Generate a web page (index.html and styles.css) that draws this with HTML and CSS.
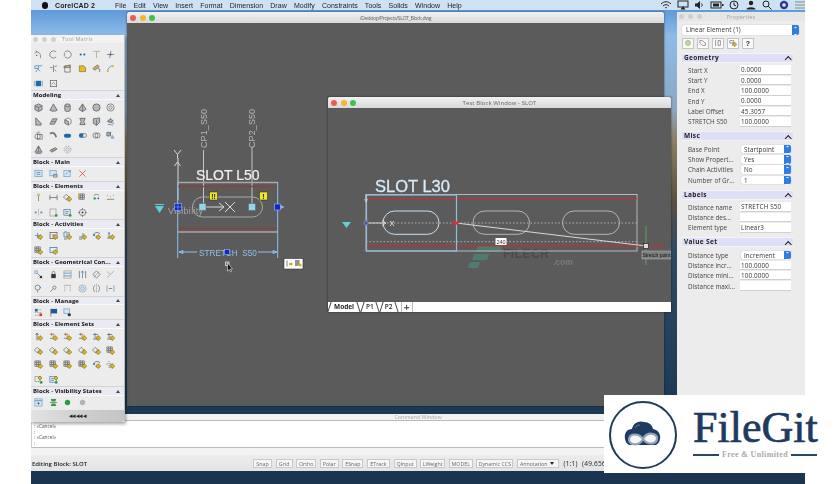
FILE: index.html
```html
<!DOCTYPE html>
<html lang="en">
<head>
<meta charset="utf-8">
<title>CorelCAD - SLOT_Block</title>
<link rel="stylesheet" href="styles.css">
</head>
<body>
<svg class="defs" aria-hidden="true">
  <symbol id="ya" viewBox="0 0 10 10"><path class="y" d="M4.5 5.5h2.3V4l3 2.8-3 2.8V8H4.5z"/></symbol>
  <symbol id="gd" viewBox="0 0 10 10"><circle class="fg" cx="8" cy="8.3" r="1.5"/></symbol>
  <symbol id="win" viewBox="0 0 10 10"><rect class="b" x="1" y="1.5" width="7" height="6.5"/><path class="g" d="M2.500 4h4M2.500 6h3"/></symbol>
  <symbol id="ps" viewBox="0 0 10 10"><path class="g" d="M1 7h5M1 2.500h5"/><path class="r" d="M3 1v3"/><rect class="fg2" x="4" y="3.500" width="2" height="2"/></symbol>
  <symbol id="dg" viewBox="0 0 10 10"><path class="g" d="M3.500 1.500L7 4.500 3.500 7.500.5 4.500z"/></symbol>
  <symbol id="gm" viewBox="0 0 10 10"><path class="g" d="M1 1h6v6H1zM3 1v6M5 1v6M1 3h6M1 5h6"/></symbol>
  <symbol id="box" viewBox="0 0 10 10"><path class="s" d="M5 1l4 2v4.500l-4 2-4-2V3z"/><path class="g" d="M1 3l4 2 4-2M5 5v4"/></symbol>
  <symbol id="cone" viewBox="0 0 10 10"><path class="s" d="M5 1l4 7c-2 1.500-6 1.500-8 0z"/></symbol>
  <symbol id="cyl" viewBox="0 0 10 10"><path class="s" d="M2 2.500c0-2 6-2 6 0v5.500c0 2-6 2-6 0z"/><path class="g" d="M2 3c1 1.500 5 1.500 6 0"/></symbol>
  <symbol id="pyr" viewBox="0 0 10 10"><path class="s" d="M5 1l4 6-4 2.500L1 7z"/><path class="g" d="M5 1v8.500"/></symbol>
  <symbol id="sph" viewBox="0 0 10 10"><circle class="s" cx="5" cy="5" r="4"/></symbol>
  <symbol id="tor" viewBox="0 0 10 10"><circle class="g" cx="5" cy="5" r="4"/><circle class="g" cx="5" cy="5" r="1.800"/></symbol>
</svg>

<main class="desktop">
  <header class="menubar">
    <span class="apple"></span>
    <b class="appname">CorelCAD 2</b>
    <nav class="menus">
      <span>File</span><span>Edit</span><span>View</span><span>Insert</span><span>Format</span><span>Dimension</span><span>Draw</span><span>Modify</span><span>Constraints</span><span>Tools</span><span>Solids</span><span>Window</span><span>Help</span>
    </nav>
    <div class="status-icons">
      <svg viewBox="0 0 12 10" class="mi"><path class="k" d="M1 4c3-3 7-3 10 0M3 6c2-1.800 4-1.800 6 0M5 8c.6-.6 1.400-.6 2 0"/></svg>
      <svg viewBox="0 0 12 10" class="mi"><rect class="k" x="1" y="1" width="10" height="6"/><path class="kf" d="M3.500 9.500L6 6l2.500 3.500z"/></svg>
      <svg viewBox="0 0 12 10" class="mi"><path class="kf" d="M2 3.500h2L7 1v8L4 6.500H2z"/><path class="k" d="M8.500 3.500c.8 1 .8 2 0 3"/></svg>
      <svg viewBox="0 0 14 10" class="mi wide"><rect class="k" x="1" y="2" width="10" height="6"/><path class="kf" d="M3 3.500h6v3H3zM12 4h1.500v2H12z"/></svg>
      <svg viewBox="0 0 12 10" class="mi"><circle class="k" cx="6" cy="5" r="4"/><path class="k" d="M6 2.500V5l2 1"/></svg>
      <svg viewBox="0 0 12 10" class="mi"><circle class="kf" cx="6" cy="3" r="2.200"/><path class="kf" d="M1.500 9.500c0-3 9-3 9 0z"/></svg>
      <svg viewBox="0 0 12 10" class="mi"><circle class="k" cx="5" cy="4" r="3"/><path class="k" d="M7.200 6.200L10.500 9.500"/></svg>
      <svg viewBox="0 0 12 10" class="mi"><circle class="sir" cx="6" cy="5" r="4.200"/><circle class="sir2" cx="6" cy="5" r="1.800"/></svg>
      <svg viewBox="0 0 12 10" class="mi"><path class="lines" d="M1 2h10M1 5h10M1 8h10"/></svg>
    </div>
  </header>

  <section class="command">
    <div class="cmd-title">Command Window</div>
    <div class="cmd-log">
      <div>: «Cancel»</div>
      <div>:</div>
      <div>: «Cancel»</div>
      <div>:</div>
    </div>
    <div class="cmd-strip"></div>
    <div class="statusbar">
      <span class="editing">Editing Block: SLOT</span>
      <div class="toggles">
        <span>Snap</span><span>Grid</span><span>Ortho</span><span>Polar</span><span>ESnap</span><span>ETrack</span><span>QInput</span><span>LWeight</span><span>MODEL</span><span>Dynamic CCS</span>
        <span class="anno">Annotation<i></i></span>
        <em>(1:1)</em><em>(49.6560</em>
      </div>
    </div>
  </section>

  <section class="window main-window">
    <div class="titlebar main-title"><i class="dot red"></i><i class="dot amber"></i><i class="dot green"></i><span>/Desktop/Projects/SLOT_Block.dwg</span></div>
    <svg class="canvas" viewBox="127 23 537 383">
      <g class="t-g">
        <text class="vert" transform="translate(206.500 148) rotate(-90)">CP1_S50</text>
        <text class="vert" transform="translate(255 148) rotate(-90)">CP2_S50</text>
      </g>
      <path class="l-w" d="M203.500 150v57M252 147v60"/>
      <path class="l-w2" d="M178 200v-42M174 150l3.500 4.500 3.500-4.500M177.500 154.500v4M174.500 166l3-4 3 4"/>
      <text class="title50" x="196" y="180">SLOT L50</text>
      <path class="l-g" d="M178 182.500h100M178 232h100"/>
      <path class="l-r" d="M178 186.500h100M178 228.500h100"/>
      <path class="l-b" d="M177.700 182v76M277.700 182v76"/>
      <rect class="l-slot" x="192.500" y="197" width="70" height="20" rx="10"/>
      <path class="l-w2" d="M204 207h20M219 203l5 4-5 4M225 202l10 10M235 202l-10 10"/>
      <rect class="sq" x="199" y="203.500" width="7" height="7"/>
      <rect class="sq" x="248.500" y="203.500" width="7" height="7"/>
      <rect class="warn" x="209.500" y="192" width="8" height="8"/><text class="warn-t" x="213.500" y="198.500">!!</text>
      <rect class="warn" x="259.500" y="192" width="8" height="8"/><text class="warn-t" x="263.500" y="198.500">!</text>
      <path class="tri" d="M155 206h9l-4.500 7z"/><path class="tri-bar" d="M155 204.500h9"/>
      <text class="vis" x="168" y="214">Visibility</text>
      <rect class="grip" x="174.500" y="203.500" width="7" height="7"/><path class="grip-l" d="M174.500 207h7M178 203.500v7"/>
      <rect class="grip" x="274.500" y="204" width="6" height="6"/><path class="grip-a" d="M280.500 205l4 2-4 2z"/>
      <path class="l-b" d="M179 252h18M258 252h19M179 252l4-1.500v3zM277 252l-4-1.500v3z"/>
      <text class="dim" x="199" y="255.500">STRETCH  S50</text>
      <rect class="grip" x="224.500" y="249.500" width="5" height="5"/>
      <rect class="sm" x="225.500" y="262" width="3.500" height="3.500"/>
      <path class="cur" d="M227.500 263v8l1.800-1.500 1.200 2.500 1-.5-1.200-2.500 2.200-.2z"/>
      <rect class="tag" x="284" y="258.500" width="19" height="10.500"/>
      <path class="tag-k" d="M287 260.500v6M295 261h5M295 263h5M295 265h5M296 260v6M298 260v6"/>
      <path class="tag-y" d="M289 263h2v-1l2 2-2 2v-1h-2zM298 264h2v-1l2 2-2 2v-1h-2z"/>
    </svg>
  </section>

  <section class="window test-window">
    <div class="titlebar"><i class="dot red"></i><i class="dot amber"></i><i class="dot green"></i><span>Test Block Window - SLOT</span></div>
    <svg class="canvas" viewBox="328 108 343 194">
      <path class="wm-f" d="M478 246h24l-2 6h-24zM474 254h15l-2 6h-15zM470 262h10l-2 6h-10z"/>
      <text class="wm" x="503" y="258">FILECR</text>
      <text class="wm2" x="553" y="265">.com</text>
      <text class="title30" x="375" y="192">SLOT L30</text>
      <rect class="l-w3" x="366" y="194.500" width="271" height="56.500"/>
      <path class="l-r2" d="M366 198.500h271M366 245.700h300"/>
      <path class="l-dot" d="M366 223h271M366 241.700h271"/>
      <rect class="l-hi" x="366.500" y="195" width="90" height="56"/>
      <path class="l-gr" d="M646 226v39"/>
      <rect class="l-slot2 hi" x="383" y="211" width="56" height="23.300" rx="11.600"/>
      <rect class="l-slot2" x="473" y="211" width="56.500" height="23.300" rx="11.600"/>
      <rect class="l-slot2" x="562.500" y="211" width="57" height="23.300" rx="11.600"/>
      <path class="l-w2" d="M456 223l190 23M366 223h19M382 220.500l4 2.500-4 2.500"/>
      <text class="xm" x="389.500" y="226">X</text>
      <path class="l-tick" d="M366 195v5M364.500 199l1.500 3 1.500-3"/>
      <path class="red-tri" d="M453 220l7 3-7 3z"/>
      <circle class="cg" cx="366" cy="223" r="2.200"/>
      <path class="tri" d="M342 222h9l-4.500 6z"/>
      <rect class="sg" x="643.500" y="243.500" width="5" height="5"/>
      <rect class="lbl" x="495.500" y="238" width="11" height="7"/><text class="lbl-t" x="501" y="243.500">240</text>
      <rect class="tip" x="642" y="251" width="29" height="8"/><text class="tip-t" x="656.500" y="257">Stretch point</text>
    </svg>
    <div class="tabs">
      <span class="tab active">Model</span><span class="tab">P1</span><span class="tab">P2</span><span class="tab-add">+</span>
    </div>
  </section>

  <aside class="palette">
    <div class="pal-title"><i></i><i></i><i></i><span>Tool Matrix</span></div>
    <div class="pal-grid first">
      <svg class="ic" viewBox="0 0 10 10"><path class="g" d="M2 2c4 0 6 3 5 7M1 4l2-2-1-1.500"/><circle class="fb" cx="3" cy="6" r=".8"/></svg>
      <svg class="ic" viewBox="0 0 10 10"><path class="g" d="M8 2.500A4 4 0 1 0 8 7.500"/></svg>
      <svg class="ic" viewBox="0 0 10 10"><path class="g" d="M2 2.500a4 4 0 1 1 0 5"/><path class="b" d="M1.500 3v4"/></svg>
      <svg class="ic" viewBox="0 0 10 10"><circle class="fb" cx="3" cy="5" r="1.200"/><circle class="fb" cx="7" cy="5" r="1.200"/></svg>
      <svg class="ic" viewBox="0 0 10 10"><path class="lg" d="M1 1.500h8M5 1.500V9"/></svg>
      <svg class="ic" viewBox="0 0 10 10"><path class="g" d="M1 5h8M5.500 1L4 9"/><circle class="fb" cx="5" cy="5" r="1"/></svg>
      <svg class="ic" viewBox="0 0 10 10"><path class="b" d="M1 2h4v3H1zM4 5l3 3M5 2h4"/><path class="g" d="M2 9l2-3"/></svg>
      <svg class="ic" viewBox="0 0 10 10"><path class="g" d="M5 1v8M1 4h3"/><path class="b" d="M6 3l3-1M6 6l2 2"/></svg>
      <svg class="ic" viewBox="0 0 10 10"><path class="g" d="M2 2h6v7H2z"/><path class="o" d="M1 3l7-2v3H1z"/></svg>
      <svg class="ic" viewBox="0 0 10 10"><path class="y" d="M1.500 2h5l2 2v4.500h-7z"/></svg>
      <svg class="ic" viewBox="0 0 10 10"><path class="o" d="M1 5l5-4 2 2-5 4z"/><path class="g" d="M6 5l3 1-1 3"/></svg>
      <svg class="ic" viewBox="0 0 10 10"><path class="b" d="M2 8c0-4 3-6 6-6"/><circle class="fy" cx="7.500" cy="2.500" r="1.200"/><circle class="fy" cx="2" cy="8" r="1.200"/></svg>
      <svg class="ic" viewBox="0 0 10 10"><rect class="fb" x="2" y="2" width="6" height="6"/><path class="lb" d="M.5 2v6M9.500 2v6"/></svg>
      <svg class="ic" viewBox="0 0 10 10"><rect class="g" x="1.500" y="1.500" width="7" height="7"/><path class="b" d="M3 6l2-2 2 2"/></svg>
    </div>

    <div class="pal-section">
      <div class="pal-head">Modeling</div>
      <div class="pal-grid">
        <svg class="ic"><use href="#box"/></svg><svg class="ic"><use href="#cone"/></svg><svg class="ic"><use href="#cyl"/></svg><svg class="ic"><use href="#pyr"/></svg><svg class="ic"><use href="#sph"/></svg><svg class="ic"><use href="#tor"/></svg>
        <svg class="ic" viewBox="0 0 10 10"><path class="s" d="M2 1l6 6v2H2z"/></svg>
        <svg class="ic" viewBox="0 0 10 10"><path class="s" d="M1 8l3-6h5L6 8z"/><path class="g" d="M3 5h5"/></svg>
        <svg class="ic" viewBox="0 0 10 10"><path class="g" d="M2 3l4-2 3 2v4l-3 2"/><path class="s" d="M2 3v4l4 2V5z"/></svg>
        <svg class="ic" viewBox="0 0 10 10"><path class="s" d="M2 1.500h6L6.500 5 8 8.500H2L3.500 5z"/></svg>
        <svg class="ic" viewBox="0 0 10 10"><path class="s" d="M1.500 2l7-1v5L5 9.500 1.500 7z"/><path class="g" d="M5 3v6"/></svg>
        <svg class="ic" viewBox="0 0 10 10"><path class="g" d="M5 1v2M1 5l8 2"/><path class="s" d="M2 4l3-1.500L8 4 5 6z"/><path class="b" d="M2 8l6 1"/></svg>
        <svg class="ic" viewBox="0 0 10 10"><circle class="g" cx="4" cy="6" r="3"/><rect class="g" x="4" y="4" width="5" height="5"/><path class="b" d="M3 2c1-1 3-1 4 0"/></svg>
        <svg class="ic" viewBox="0 0 10 10"><path class="sw" d="M1 3c3-2 6-1 7 4"/></svg>
        <svg class="ic" viewBox="0 0 10 10"><rect class="fb" x="1" y="3" width="8" height="4.500" rx="2.200"/></svg>
        <svg class="ic" viewBox="0 0 10 10"><path class="fb" d="M3.500 2.500h2v5h-2a2.500 2.500 0 0 1 0-5z"/><path class="g" d="M5.500 3h2a2 2 0 0 1 0 4h-2z"/></svg>
        <svg class="ic" viewBox="0 0 10 10"><circle class="g" cx="3.800" cy="5" r="2.800"/><circle class="g" cx="6.200" cy="5" r="2.800"/></svg>
        <svg class="ic" viewBox="0 0 10 10"><path class="s" d="M1 1.500h4v4H1z"/><path class="b" d="M7 5l1.500 3H6zM3 4l3-3"/></svg>
        <svg class="ic" viewBox="0 0 10 10"><path class="s" d="M5 1L9 8H1z"/><path class="g" d="M5 1v7M2 9.500h6"/></svg>
        <svg class="ic" viewBox="0 0 10 10"><path class="s" d="M1 6l6-3 2 1.500-6 3.500z"/><path class="g" d="M3 5l2 2M5 4l2 2"/></svg>
        <svg class="ic" viewBox="0 0 10 10"><circle class="dotc" cx="5" cy="5" r="3.800"/><circle class="lg" cx="5" cy="5" r="1.800"/></svg>
      </div>
    </div>

    <div class="pal-section">
      <div class="pal-head">Block - Main</div>
      <div class="pal-grid">
        <svg class="ic" viewBox="0 0 10 10"><rect class="lb" x="1" y="1.500" width="8" height="7"/><path class="b" d="M3 4h4M3 6h4"/></svg>
        <svg class="ic" viewBox="0 0 10 10"><rect class="lb" x="1" y="1.500" width="7" height="6"/><path class="g" d="M5 6h4v3H5z"/></svg>
        <svg class="ic" viewBox="0 0 10 10"><rect class="lb" x="1" y="1.500" width="7" height="7"/><path class="b" d="M6 3l3-1M3 6l2-2"/></svg>
        <svg class="ic" viewBox="0 0 10 10"><path class="r" d="M1.500 1.500l7 7M8.500 1.500l-7 7"/></svg>
      </div>
    </div>

    <div class="pal-section">
      <div class="pal-head">Block - Elements</div>
      <div class="pal-grid">
        <svg class="ic" viewBox="0 0 10 10"><path class="g" d="M5 3v6M3.500 3L5 1l1.500 2"/><circle class="fy" cx="5" cy="1.500" r="1"/></svg>
        <svg class="ic" viewBox="0 0 10 10"><path class="g" d="M1 2v6M9 2v6M1 5h8"/><path class="b" d="M1 5h2M7 5h2"/></svg>
        <svg class="ic"><use href="#dg"/><use href="#ya"/></svg>
        <svg class="ic"><use href="#gm"/><circle class="fy" cx="1" cy="1" r="1"/></svg>
        <svg class="ic" viewBox="0 0 10 10"><path class="g" d="M2 3c1-2 5-2 6 0"/><circle class="fg" cx="3" cy="6" r="1.300"/><circle class="fb" cx="7" cy="6" r="1"/></svg>
        <svg class="ic" viewBox="0 0 10 10"><path class="b" d="M1 2.500h1M8 2.500h1"/><path class="g" d="M1 7h8"/><circle class="fy" cx="5" cy="4" r=".8"/></svg>
        <svg class="ic" viewBox="0 0 10 10"><path class="dash" d="M5 1v8"/><path class="b" d="M1 5h2M7 5h2M2.500 3.500L1 5l1.500 1.500M7.500 3.500L9 5 7.500 6.500"/></svg>
        <svg class="ic"><rect class="lg" x="1" y="1" width="6" height="7"/><use href="#gd"/></svg>
        <svg class="ic"><use href="#win"/><use href="#gd"/></svg>
        <svg class="ic" viewBox="0 0 10 10"><circle class="g" cx="5" cy="5" r="3.500"/><circle class="fk" cx="5" cy="5" r="1"/><path class="g" d="M5 0v2M5 8v2M0 5h2M8 5h2"/></svg>
      </div>
    </div>

    <div class="pal-section">
      <div class="pal-head">Block - Activities</div>
      <div class="pal-grid">
        <svg class="ic" viewBox="0 0 10 10"><path class="b" d="M1 5h7M4 2v6"/><use href="#ya"/></svg>
        <svg class="ic"><rect class="g" x="1" y="1.500" width="7" height="6"/><path class="r" d="M3 4h3"/><use href="#ya"/></svg>
        <svg class="ic"><path class="b" d="M1 1h3v5H1z"/><path class="g" d="M1 8h3M6 1v3"/><use href="#ya"/></svg>
        <svg class="ic"><path class="b" d="M1 6h4V2"/><path class="g" d="M1 8h3"/><use href="#ya"/></svg>
        <svg class="ic"><path class="g" d="M2 3c1-2 5-2 6 0"/><circle class="fb" cx="2" cy="4" r="1"/><use href="#ya"/></svg>
        <svg class="ic"><path class="g" d="M1 7h3M3 2v5"/><circle class="fb" cx="3" cy="2" r=".8"/><use href="#ya"/></svg>
        <svg class="ic"><use href="#gm"/><use href="#ya"/></svg>
        <svg class="ic"><rect class="b" x="1" y="1.500" width="7" height="5"/><use href="#ya"/></svg>
      </div>
    </div>

    <div class="pal-section">
      <div class="pal-head">Block - Geometrical Con...</div>
      <div class="pal-grid">
        <svg class="ic" viewBox="0 0 10 10"><rect class="lb" x="1" y="1" width="3" height="3"/><path class="g" d="M4 4l3 3"/><rect class="fk" x="6.500" y="6.500" width="2.500" height="2.500"/></svg>
        <svg class="ic" viewBox="0 0 10 10"><rect class="fk" x="2.500" y="4.500" width="5" height="4.500"/><path class="g" d="M3.500 4.500V3a1.500 1.500 0 0 1 3 0v1.500"/></svg>
        <svg class="ic" viewBox="0 0 10 10"><rect class="lg" x="1" y="1" width="8" height="8"/><path class="b" d="M1 3.500h8M1 6.500h8"/></svg>
        <svg class="ic" viewBox="0 0 10 10"><path class="g" d="M1.500 1v8M8.500 1v8"/><path class="b" d="M5 1v8M3.500 3L5 1l1.500 2"/></svg>
        <svg class="ic" viewBox="0 0 10 10"><path class="lb" d="M2 8l6-6"/><path class="g" d="M5 1l4 4-4 4-4-4z"/></svg>
        <svg class="ic" viewBox="0 0 10 10"><path class="lg" d="M1 1.500L5 5 1 8.500M5 5l4-4"/></svg>
        <svg class="ic" viewBox="0 0 10 10"><circle class="g" cx="4" cy="4" r="2.800"/><path class="g" d="M4 7v2.500"/><circle class="fb" cx="7" cy="4" r=".6"/></svg>
        <svg class="ic" viewBox="0 0 10 10"><circle class="g" cx="6" cy="4" r="1.800"/><path class="g" d="M1.500 8.500L4.500 5.500"/></svg>
        <svg class="ic" viewBox="0 0 10 10"><path class="dash" d="M2 3v6M8 3v6"/><path class="lg" d="M1 1.500h8"/></svg>
        <svg class="ic" viewBox="0 0 10 10"><circle class="lg" cx="5" cy="5" r="4"/><circle class="lb" cx="5" cy="5" r="2"/></svg>
        <svg class="ic" viewBox="0 0 10 10"><path class="g" d="M3.500 1C1 3 1 7 3.500 9M6.500 1C9 3 9 7 6.500 9"/><path class="dash" d="M5 0v10"/></svg>
        <svg class="ic" viewBox="0 0 10 10"><path class="lb" d="M2 2H1v6h1M8 2h1v6H8"/><path class="g" d="M3 5h4"/></svg>
      </div>
    </div>

    <div class="pal-section">
      <div class="pal-head">Block - Manage</div>
      <div class="pal-grid">
        <svg class="ic" viewBox="0 0 10 10"><path class="dash" d="M1 2h8M1 5h8M1 8h8"/><rect class="fb" x="1" y="1" width="3" height="3"/><rect class="fr" x="6" y="6" width="3" height="3"/></svg>
        <svg class="ic" viewBox="0 0 10 10"><path class="fnv" d="M2 1h7v5H2z"/><path class="g" d="M2 1v8.500"/></svg>
        <svg class="ic" viewBox="0 0 10 10"><rect class="lb" x="1" y="1" width="6" height="5"/><circle class="fk" cx="7" cy="7.500" r="1.800"/></svg>
      </div>
    </div>

    <div class="pal-section">
      <div class="pal-head">Block - Element Sets</div>
      <div class="pal-grid">
        <svg class="ic"><path class="g" d="M3 1.500v7M1.500 3L3 1l1.500 2"/><use href="#ya"/></svg>
        <svg class="ic"><use href="#ps"/><use href="#ya"/></svg><svg class="ic"><use href="#ps"/><use href="#ya"/></svg><svg class="ic"><use href="#ps"/><use href="#ya"/></svg>
        <svg class="ic"><path class="g" d="M1 7h5M1 2.500h5"/><path class="b" d="M3 1v5"/><use href="#ya"/></svg>
        <svg class="ic"><path class="g" d="M1 7h5M1 2.500h5M3 1v5"/><use href="#ya"/></svg>
        <svg class="ic"><use href="#dg"/><use href="#ya"/></svg><svg class="ic"><use href="#dg"/><use href="#ya"/></svg><svg class="ic"><use href="#dg"/><use href="#ya"/></svg><svg class="ic"><use href="#dg"/><use href="#ya"/></svg><svg class="ic"><use href="#dg"/><use href="#ya"/></svg>
        <svg class="ic"><use href="#gm"/><use href="#ya"/></svg>
        <svg class="ic"><use href="#gm"/><use href="#ya"/></svg><svg class="ic"><use href="#gm"/><use href="#ya"/></svg><svg class="ic"><use href="#gm"/><use href="#ya"/></svg><svg class="ic"><use href="#gm"/><use href="#ya"/></svg>
        <svg class="ic"><path class="g" d="M2 3c1-2 5-2 6 0"/><circle class="fb" cx="2" cy="4" r="1"/><use href="#ya"/></svg>
        <svg class="ic"><path class="dash" d="M3 1v8"/><path class="b" d="M.5 4h1.500M4 4h1.500"/><use href="#ya"/></svg>
        <svg class="ic"><rect class="lg" x="1" y="1.500" width="5" height="5"/><path class="y" d="M6 1l2 2-2 2-2-2z"/><use href="#gd"/></svg>
        <svg class="ic"><use href="#win"/><path class="y" d="M7 1l2 2-2 2-2-2z"/><use href="#gd"/></svg>
      </div>
    </div>

    <div class="pal-section">
      <div class="pal-head">Block - Visibility States</div>
      <div class="pal-grid">
        <svg class="ic" viewBox="0 0 10 10"><rect class="lb" x="1" y="1" width="8" height="8"/><path class="b" d="M1 3h8"/><circle class="fk" cx="5" cy="6" r="1"/></svg>
        <svg class="ic" viewBox="0 0 10 10"><path class="fg" d="M2 1h6L7 4H3z"/><path class="g" d="M1 5h8"/><path class="fg" d="M3 6h4l1 3H2z"/></svg>
        <svg class="ic" viewBox="0 0 10 10"><circle class="fg" cx="5" cy="5" r="3"/></svg>
        <svg class="ic" viewBox="0 0 10 10"><circle class="fgy" cx="5" cy="5" r="3"/></svg>
      </div>
    </div>
    <div class="pal-foot">◂◂◂◂◂</div>
  </aside>

  <aside class="props">
    <div class="pal-title props-title"><i></i><i></i><i></i><span>Properties</span></div>
    <div class="prop-body">
      <div class="sel wide-sel"><span>Linear Element (1)</span><b class="step"></b></div>
      <div class="prop-tools">
        <button class="tb"><svg viewBox="0 0 10 10"><circle class="sg2" cx="5" cy="5" r="3"/><circle class="fy" cx="5" cy="5" r="1"/></svg></button>
        <button class="tb"><svg viewBox="0 0 10 10"><path class="g" d="M1 2h3l4 3v3H4L1 5z"/></svg></button>
        <button class="tb"><svg viewBox="0 0 10 10"><path class="g" d="M2 1v8M5 2h3v6H5z"/></svg></button>
        <button class="tb"><svg viewBox="0 0 10 10"><path class="g" d="M1 2h5v3H1z"/><use href="#ya"/></svg></button>
        <button class="tb">?</button>
      </div>

      <section class="group">
        <h2>Geometry</h2>
        <div class="row"><label>Start X</label><div class="val">0.0000</div></div>
        <div class="row"><label>Start Y</label><div class="val">0.0000</div></div>
        <div class="row"><label>End X</label><div class="val">100.0000</div></div>
        <div class="row"><label>End Y</label><div class="val">0.0000</div></div>
        <div class="row"><label>Label Offset</label><div class="val">45.3057</div></div>
        <div class="row"><label>STRETCH S50</label><div class="val">100.0000</div></div>
      </section>
      <section class="group">
        <h2>Misc</h2>
        <div class="row"><label>Base Point</label><div class="sel"><span>Startpoint</span><b class="step"></b></div></div>
        <div class="row"><label>Show Propert...</label><div class="sel"><span>Yes</span><b class="step"></b></div></div>
        <div class="row"><label>Chain Activities</label><div class="sel"><span>No</span><b class="step"></b></div></div>
        <div class="row"><label>Number of Gr...</label><div class="sel"><span>1</span><b class="step"></b></div></div>
      </section>
      <section class="group">
        <h2>Labels</h2>
        <div class="row"><label>Distance name</label><div class="val">STRETCH S50</div></div>
        <div class="row"><label>Distance des...</label><div class="val"></div></div>
        <div class="row"><label>Element type</label><div class="val">Linear3</div></div>
      </section>
      <section class="group">
        <h2>Value Set</h2>
        <div class="row"><label>Distance type</label><div class="sel"><span>Increment</span><b class="step"></b></div></div>
        <div class="row"><label>Distance incr...</label><div class="val">100.0000</div></div>
        <div class="row"><label>Distance mini...</label><div class="val">100.0000</div></div>
        <div class="row"><label>Distance maxi...</label><div class="val"></div></div>
      </section>
    </div>
  </aside>
</main>

<div class="logo">
  <svg class="logo-mark" viewBox="0 0 70 70">
    <circle class="lm-ring" cx="35" cy="35" r="33"/>
    <path class="lm-cloud" d="M17 39c-1-6 2-10 7-10 1-6 7-9 12-7 5 0 8 3 9 7 5 1 8 5 7 10-.5 3-2 5-4 6H21c-2-1-3.500-3-4-6z"/>
    <path class="lm-inf" d="M35 39c-4-6-13-6-14 0-1 6 10 8 14 0 4-8 15-6 14 0-1 6-10 6-14 0z"/>
    <path class="lm-shine" d="M27 28c1-2 3-3 5-3"/>
  </svg>
  <div class="logo-text">
    <div class="logo-name">FileGit</div>
    <div class="logo-tag"><i></i><span>Free &amp; Unlimited</span><i></i></div>
  </div>
</div>
</body>
</html>
```
FILE: styles.css
```css
* { box-sizing: border-box; }
html, body { margin: 0; padding: 0; width: 836px; height: 484px; overflow: hidden; background: #fff; }
body { position: relative; font-family: "Open Sans", "Liberation Sans", sans-serif; }
.defs { position: absolute; width: 0; height: 0; }

.desktop {
  position: absolute; left: 31px; top: 0; width: 774px; height: 484px; overflow: hidden;
  filter: blur(.42px);
  background: linear-gradient(180deg, #5f9ad8 10px, #8fbbe8 36px, #8aa7c2 110px, #8d8064 140px, #5c5240 200px, #2f4a66 250px, #1d3a55 400px, #1b3550 484px);
}

/* menu bar */
.menubar { display: flex; align-items: center; height: 10px; background: #cfe2f3; color: #222; font: 7px "Liberation Sans", sans-serif; }
.apple { width: 6px; height: 7px; margin-left: 11px; background: #111; border-radius: 3px; }
.appname { margin-left: 7px; width: 50px; font-size: 7px; letter-spacing: .1px; white-space: nowrap; }
.menus { display: flex; gap: 7.2px; margin-left: 10px; letter-spacing: .03px; white-space: nowrap; }
.status-icons { position: absolute; left: 629px; top: 0; display: flex; gap: 4.500px; align-items: center; height: 10px; }
.mi { width: 12px; height: 10px; }
.mi.wide { width: 14px; }
.k { fill: none; stroke: #222; stroke-width: 1; }
.kf { fill: #222; }
.sir { fill: #2b3a8f; }
.sir2 { fill: #e8e8ff; }
.lines { fill: none; stroke: #9aa; stroke-width: 1.4; }

/* windows */
.window { position: absolute; background: #5b5b5b; box-shadow: 0 0 2px rgba(0,0,0,.55); display: flex; flex-direction: column; }
.main-window { left: 96px; top: 12px; width: 537px; height: 394px; }
.test-window { left: 297px; top: 97px; width: 343px; height: 215px; z-index: 2; }
.titlebar {
  position: relative; flex: none; height: 11px; background: linear-gradient(#f1f1f1, #d9d9d9);
  display: flex; align-items: center; gap: 3.500px; padding-left: 3px;
  border-radius: 2px 2px 0 0;
}
.titlebar span { position: absolute; left: 0; right: 0; text-align: center; font-size: 6px; color: #666; letter-spacing: .08px; }
.main-title span { font-size: 5.200px; letter-spacing: -.4px; }
.dot { width: 6px; height: 6px; border-radius: 50%; }
.dot.red { background: #ee5a52; }
.dot.amber { background: #f5b52f; }
.dot.green { background: #3fc14a; }
.canvas { display: block; flex: 1; min-height: 0; width: 100%; font-family: "Liberation Sans", sans-serif; }

/* drawing styles */
.l-w { stroke: #c4c4c4; stroke-width: 1; fill: none; }
.l-w2 { stroke: #d8d8d8; stroke-width: 1; fill: none; }
.l-w3 { stroke: #b9b9b9; stroke-width: 1; fill: none; }
.l-g { stroke: #a8a8a8; stroke-width: 1.500; fill: none; }
.l-r { stroke: #8a4040; stroke-width: 1.500; fill: none; }
.l-r2 { stroke: #ab3a3e; stroke-width: 1.500; fill: none; }
.l-b { stroke: #8cc0ee; stroke-width: 1; fill: none; }
.l-hi { stroke: #90bce0; stroke-width: 1.200; fill: none; }
.l-gr { stroke: #5c8a5c; stroke-width: 1.500; fill: none; }
.l-dot { stroke: #b0b0b0; stroke-width: 1; stroke-dasharray: 1.500 2; fill: none; }
.l-slot { stroke: #a9a9a9; stroke-width: 1; fill: none; }
.l-slot2 { stroke: #b5b5b5; stroke-width: 1; fill: none; }
.l-slot2.hi { stroke: #c6e0f5; }
.l-tick { stroke: #ddd; stroke-width: .7; fill: none; }
.vert { font-size: 9px; fill: #b8b8b8; letter-spacing: .1px; }
.title50 { font-size: 14px; fill: #f0f0f0; stroke: #f0f0f0; stroke-width: .2; }
.title30 { font-size: 16.500px; fill: #d6ecfb; font-weight: 400; stroke: #d6ecfb; stroke-width: .3; }
.sq { fill: #8fd6f2; stroke: #5b5b5b; stroke-width: .5; }
.warn { fill: #f2e62a; stroke: #222; stroke-width: .5; }
.warn-t { font-size: 7px; font-weight: 700; fill: #222; text-anchor: middle; }
.tri { fill: #5fd0d8; }
.tri-bar { stroke: #5fd0d8; stroke-width: 1; }
.vis { font-size: 9px; fill: #a4a4a4; letter-spacing: .3px; }
.grip { fill: #1a22cc; stroke: #8cc0ee; stroke-width: .6; }
.grip-l { stroke: #8cc0ee; stroke-width: .5; }
.grip-a { fill: #8cc0ee; }
.dim { font-size: 8.200px; fill: #8cc0ee; white-space: pre; }
.sm { fill: #777; stroke: #ddd; stroke-width: .8; }
.cur { fill: #111; stroke: #eee; stroke-width: .6; }
.tag { fill: #fff; stroke: #333; stroke-width: .6; }
.tag-k { stroke: #444; stroke-width: .7; fill: none; }
.tag-y { fill: #d4b020; }
.wm { font-size: 12.500px; font-weight: 700; fill: #4a4a4a; letter-spacing: .2px; }
.wm2 { font-size: 8.500px; fill: #7c7c7c; font-weight: 700; }
.wm-f { fill: #4e7c70; }
.xm { font-size: 7.500px; fill: #eee; }
.red-tri { fill: #d83034; }
.cg { fill: #5b5b5b; stroke: #7d7dee; stroke-width: 1; }
.sg { fill: #ddd; stroke: #222; stroke-width: .7; }
.lbl { fill: #fff; }
.lbl-t { font-size: 5.500px; fill: #333; text-anchor: middle; }
.tip { fill: #808080; stroke: #ccc; stroke-width: .4; }
.tip-t { font-size: 5px; fill: #111; text-anchor: middle; }

/* tabs */
.tabs { flex: none; height: 10px; background: #fff; display: flex; align-items: center; font-size: 6.500px; color: #222; }
.tab { position: relative; margin-left: 1px; padding: 0 5px; height: 10px; line-height: 10px; font-weight: 600; }
.tab::before, .tab::after { content: ""; position: absolute; top: 0; bottom: 0; width: 0; border-left: 1px solid #444; }
.tab::before { left: 1px; transform: skewX(-18deg); }
.tab::after { right: 1px; transform: skewX(18deg); }
.tab.active { font-weight: 700; margin-left: 0; padding: 0 6px; }
.tab-add { width: 12px; margin-left: 3px; border-left: 1px solid #bbb; border-right: 1px solid #bbb; text-align: center; font-size: 10px; line-height: 10px; font-weight: 700; color: #555; }

/* palette */
.palette { position: absolute; left: 0; top: 35px; width: 94px; background: #ececec; border-right: 1px solid #bbb; box-shadow: 1px 2px 3px rgba(0,0,0,.35); z-index: 3; }
.pal-title { position: relative; height: 8px; background: #f3f3f3; display: flex; align-items: center; gap: 4px; padding-left: 2px; }
.pal-title i { width: 5px; height: 5px; border-radius: 50%; background: #cfcfcf; }
.pal-title span { position: absolute; left: 0; right: 0; text-align: center; font-size: 5.500px; color: #a0a0a0; letter-spacing: .2px; }
.pal-grid { display: grid; grid-template-columns: repeat(6, 14.400px); grid-auto-rows: 14.300px; padding-left: .8px; align-items: center; justify-items: center; }
.pal-grid.first { padding-top: 4.350px; padding-bottom: .1px; }
.pal-head { position: relative; height: 9.600px; line-height: 8.600px; padding-left: 2px; background: #eaeaf2; border-top: 1px solid #d4d4d4; border-bottom: 1px solid #fafafa; font-size: 6px; font-weight: 700; color: #111; letter-spacing: .05px; white-space: nowrap; }
.pal-head::after { content: ""; position: absolute; right: 4px; top: 2.500px; border-left: 2px solid transparent; border-right: 2px solid transparent; border-bottom: 3px solid #444; }
.pal-foot { height: 12px; line-height: 11.500px; text-align: center; font-size: 7px; letter-spacing: -.5px; color: #222; background: linear-gradient(90deg, #e2e2e2, #cfcfcf 55%, #c4c4c4); border-radius: 0 0 3px 3px; }
.ic { display: block; width: 9px; height: 9px; overflow: visible; }

/* icon paints */
.ic *, .tb svg * { stroke-width: .8; }
.g { fill: none; stroke: #666; }
.lg { fill: none; stroke: #a0a0a0; }
.b { fill: none; stroke: #3a80bd; }
.lb { fill: #d6e6f4; stroke: #6da3cf; }
.r { fill: none; stroke: #d33a3a; }
.s { fill: #b4b8bc; stroke: #555; }
.o { fill: #e8a550; stroke: #666; }
.y { fill: #e6bb22; stroke: #8a7a30; }
.sw { fill: none; stroke: #777; stroke-width: 2 !important; }
.dotc { fill: none; stroke: #778; stroke-dasharray: 1 1; }
.dash { fill: none; stroke: #777; stroke-dasharray: 1 1; }
.fb { fill: #1f6aa8; stroke: none; }
.fy { fill: #e6bb22; stroke: none; }
.fg { fill: #2c9c3e; stroke: none; }
.fg2 { fill: #e6bb22; stroke: none; }
.fr { fill: #d33a3a; stroke: none; }
.fk { fill: #333; stroke: none; }
.fnv { fill: #185a9c; stroke: none; }
.fgy { fill: #b0b5ba; stroke: none; }
.sg2 { fill: #cfe8b8; stroke: #5a9a3a; }

/* properties */
.props { position: absolute; left: 646px; top: 12px; width: 128px; height: 400px; background: #ececec; }
.props-title { height: 9px; background: #e6e6e6; }
.prop-body { padding: 4px 12px 0 5px; }
.sel { display: flex; align-items: center; height: 9.500px; background: #fff; border-radius: 2px; font-size: 6.300px; color: #333; letter-spacing: .1px; box-shadow: 0 0 1px rgba(0,0,0,.35); }
.sel span { flex: 1; padding-left: 3px; white-space: nowrap; }
.wide-sel { width: 117px; }
.wide-sel span { padding-left: 4px; }
.step { position: relative; align-self: stretch; flex: none; width: 7px; background: #2f7de1; border-radius: 0 2px 2px 0; }
.step::before { content: ""; position: absolute; left: 2px; top: 1.500px; width: 3px; height: 6px; border-top: 1.500px solid #fff; border-bottom: 1.500px solid #fff; border-radius: 2px; }
.prop-tools { display: flex; gap: 3px; margin-top: 3px; }
.tb { width: 12px; height: 11.500px; padding: 1px; border: 1px solid #c4c4c4; background: #fafafa; font: 700 7px "Liberation Sans", sans-serif; color: #222; display: flex; align-items: center; justify-content: center; }
.tb svg { width: 8px; height: 8px; }
.group { margin-bottom: 4.300px; }
.group:first-of-type { margin-top: 3.500px; }
.group h2 { position: relative; margin: 0 0 2.500px; height: 10px; line-height: 8.500px; padding-left: 2px; font-size: 6.500px; font-weight: 700; color: #222; letter-spacing: .35px; background: #dfdff8; border: 1px solid #f4f4f4; border-width: 1px 0; }
.group h2::after { content: ""; position: absolute; right: 2.500px; top: 3.500px; width: 3.500px; height: 3.500px; border-left: 1px solid #222; border-top: 1px solid #222; transform: rotate(45deg); }
.row { display: grid; grid-template-columns: 52px 51px; align-items: center; height: 10.350px; padding-left: 6px; font-size: 6.300px; color: #444; letter-spacing: .05px; }
.row label { white-space: nowrap; overflow: hidden; }
.val { height: 9.500px; line-height: 9.500px; padding-left: 1px; background: #fff; border: 1px solid #d0d0d0; border-width: 0 0 1px; color: #333; white-space: nowrap; letter-spacing: .15px; }
.row .sel { margin-left: 1px; width: 50px; height: 8.800px; }

/* command + status */
.command { position: absolute; left: 0; top: 414px; width: 574px; height: 57px; background: #ececec; }
.cmd-title { height: 7px; line-height: 7px; text-align: center; background: #f2f2f2; border-bottom: 1px solid #bbb; font-size: 5.300px; color: #aaa; margin-right: -200px; }
.cmd-log { height: 27px; background: #fff; border-left: 1px solid #ccc; border-bottom: 1px solid #bbb; padding: 3px 0 0 2px; font-size: 4.800px; line-height: 5.500px; color: #555; }
.cmd-strip { height: 7px; background: #f3f3f3; }
.statusbar { display: flex; align-items: center; height: 16px; padding: 2px 0 1px 1px; background: linear-gradient(#ececec, #e4e4e4); }
.editing { flex: none; width: 221px; font-size: 6px; color: #222; font-weight: 600; white-space: nowrap; }
.toggles { display: grid; grid-template-columns: 19px 17px 20px 19px 21px 23px 23px 25px 24px 37px 42px auto auto; column-gap: 3.600px; align-items: center; font-size: 5.300px; color: #666; white-space: nowrap; }
.toggles span { height: 9.500px; line-height: 9px; text-align: center; background: #f6f6f6; border: 1px solid #c8c8c8; }
.toggles em { font-style: normal; font-size: 6.500px; color: #222; margin-left: 1px; letter-spacing: .2px; }
.toggles .anno { position: relative; text-align: left; padding-left: 2px; }
.anno i { position: absolute; right: 4px; top: 2.500px; border-left: 2.500px solid transparent; border-right: 2.500px solid transparent; border-top: 3.500px solid #222; }

/* logo */
.logo { position: absolute; left: 604px; top: 395px; width: 232px; height: 78px; background: #fff; z-index: 5; display: flex; }
.logo-mark { flex: none; width: 70px; height: 70px; margin: 5px 0 0 4px; }
.lm-ring { fill: none; stroke: #1f3b5e; stroke-width: 2; }
.lm-cloud { fill: #1d3a60; }
.lm-inf { fill: #f4f6f8; stroke: #93a4b8; stroke-width: 2.200; }
.lm-shine { fill: none; stroke: #6f86a2; stroke-width: 1; }
.logo-text { margin-left: 15px; width: 124px; }
.logo-name { height: 38px; margin-top: 14px; font: 400 44px/38px "Liberation Serif", serif; color: #1d3a60; -webkit-text-stroke: .7px #1d3a60; white-space: nowrap; }
.logo-tag { display: flex; align-items: center; gap: 3px; margin-top: 3px; font: 700 8px "Liberation Serif", serif; color: #a9a9a9; letter-spacing: .35px; white-space: nowrap; }
.logo-tag i { flex: 1; height: 2px; background: #2a4668; }
```
